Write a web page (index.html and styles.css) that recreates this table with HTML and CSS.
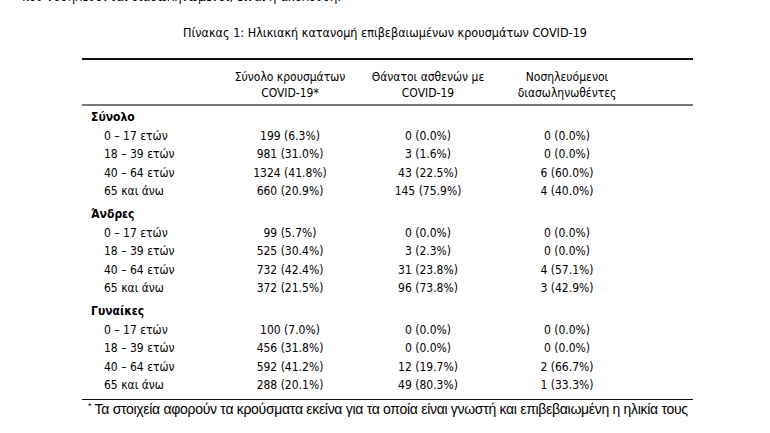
FILE: index.html
```html
<!DOCTYPE html>
<html lang="el">
<head>
<meta charset="utf-8">
<link rel="stylesheet" href="styles.css">
</head>
<body>
<div class="page">
  <p class="cut">που νοσηλεύονται διασωληνωμένοι, είναι η ακόλουθη:</p>
  <h1 class="title">Πίνακας 1: Ηλικιακή κατανομή επιβεβαιωμένων κρουσμάτων COVID-19</h1>
  <div class="table">
    <div class="head">
      <div></div>
      <div class="hcell">Σύνολο κρουσμάτων<br>COVID-19*</div>
      <div class="hcell">Θάνατοι ασθενών με<br>COVID-19</div>
      <div class="hcell">Νοσηλευόμενοι<br>διασωληνωθέντες</div>
      <div></div>
    </div>
    <div class="body">
      <div class="group">Σύνολο</div>
      <div class="row"><div class="lbl">0 – 17 ετών</div><div>199 (6.3%)</div><div>0 (0.0%)</div><div>0 (0.0%)</div><div></div></div>
      <div class="row"><div class="lbl">18 – 39 ετών</div><div>981 (31.0%)</div><div>3 (1.6%)</div><div>0 (0.0%)</div><div></div></div>
      <div class="row"><div class="lbl">40 – 64 ετών</div><div>1324 (41.8%)</div><div>43 (22.5%)</div><div>6 (60.0%)</div><div></div></div>
      <div class="row"><div class="lbl">65 και άνω</div><div>660 (20.9%)</div><div>145 (75.9%)</div><div>4 (40.0%)</div><div></div></div>

      <div class="group next">Άνδρες</div>
      <div class="row"><div class="lbl">0 – 17 ετών</div><div>99 (5.7%)</div><div>0 (0.0%)</div><div>0 (0.0%)</div><div></div></div>
      <div class="row"><div class="lbl">18 – 39 ετών</div><div>525 (30.4%)</div><div>3 (2.3%)</div><div>0 (0.0%)</div><div></div></div>
      <div class="row"><div class="lbl">40 – 64 ετών</div><div>732 (42.4%)</div><div>31 (23.8%)</div><div>4 (57.1%)</div><div></div></div>
      <div class="row"><div class="lbl">65 και άνω</div><div>372 (21.5%)</div><div>96 (73.8%)</div><div>3 (42.9%)</div><div></div></div>

      <div class="group next">Γυναίκες</div>
      <div class="row"><div class="lbl">0 – 17 ετών</div><div>100 (7.0%)</div><div>0 (0.0%)</div><div>0 (0.0%)</div><div></div></div>
      <div class="row"><div class="lbl">18 – 39 ετών</div><div>456 (31.8%)</div><div>0 (0.0%)</div><div>0 (0.0%)</div><div></div></div>
      <div class="row"><div class="lbl">40 – 64 ετών</div><div>592 (41.2%)</div><div>12 (19.7%)</div><div>2 (66.7%)</div><div></div></div>
      <div class="row"><div class="lbl">65 και άνω</div><div>288 (20.1%)</div><div>49 (80.3%)</div><div>1 (33.3%)</div><div></div></div>
    </div>
  </div>
  <p class="note"><sup>*</sup> Τα στοιχεία αφορούν τα κρούσματα εκείνα για τα οποία είναι γνωστή και επιβεβαιωμένη η ηλικία τους</p>
</div>
</body>
</html>
```

FILE: styles.css
```css
html, body {
  margin: 0;
  padding: 0;
  background: #ffffff;
}
body {
  width: 770px;
  height: 433px;
  overflow: hidden;
  font-family: "DejaVu Sans Condensed", "DejaVu Sans", "Liberation Sans", sans-serif;
  color: #000000;
}
.page {
  display: flex;
  flex-direction: column;
}
.cut {
  margin: -11px 0 0 22px;
  font-size: 13px;
  line-height: 16px;
  height: 16px;
}
.title {
  margin: 20px 0 0 0;
  font-size: 12.5px;
  line-height: 16px;
  font-weight: normal;
  text-align: center;
}
.table {
  margin: 17px 0 0 82px;
  width: 611px;
  font-size: 12px;
}
.head {
  display: grid;
  grid-template-columns: 138px 140px 136px 142px 1fr;
  border-top: 2px solid #111111;
  border-bottom: 2px solid #777777;
  padding: 9px 0 3px 0;
  line-height: 16px;
}
.hcell {
  text-align: center;
}
.body {
  display: flex;
  flex-direction: column;
  padding: 2px 0 4px 0;
  border-bottom: 1.5px solid #111111;
}
.group {
  font-weight: bold;
  line-height: 18.6px;
  padding-left: 9px;
}
.group.next {
  margin-top: 4px;
}
.row {
  display: grid;
  grid-template-columns: 138px 140px 136px 142px 1fr;
  line-height: 18.6px;
  text-align: center;
}
.row .lbl {
  text-align: left;
  padding-left: 22px;
}
.note {
  margin: 1px 0 0 88px;
  font-family: "Liberation Sans", Arial, sans-serif;
  font-size: 14px;
  line-height: 16px;
  letter-spacing: -0.3px;
}
.note sup {
  font-size: 9px;
  line-height: 0;
  vertical-align: 5px;
}
```
